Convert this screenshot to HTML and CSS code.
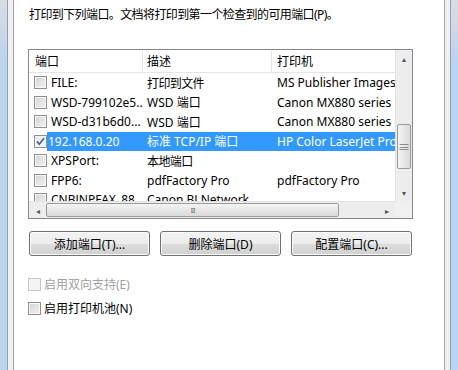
FILE: index.html
```html
<!DOCTYPE html>
<html lang="zh-CN">
<head>
    <meta charset="UTF-8">
    <title>端口</title>
    <link rel="stylesheet" href="styles.css">
</head>
<body>
    <div class="frame"></div>
    <div class="edge"></div>
    <div class="pad"></div>
    <div class="panel">
        <p class="intro">打印到下列端口。文档将打印到第一个检查到的可用端口(P)。</p>

        <div class="listbox">
            <div class="view">
                <div class="row header">
                    <div class="cell c1">端口</div>
                    <div class="cell c2">描述</div>
                    <div class="cell c3">打印机</div>
                </div>
                <div class="row">
                    <div class="cell c1"><span class="box"></span>FILE:</div>
                    <div class="cell c2 cjk">打印到文件</div>
                    <div class="cell c3">MS Publisher Imagesetter</div>
                </div>
                <div class="row">
                    <div class="cell c1"><span class="box"></span>WSD-799102e5...</div>
                    <div class="cell c2">WSD 端口</div>
                    <div class="cell c3">Canon MX880 series Printer</div>
                </div>
                <div class="row">
                    <div class="cell c1"><span class="box"></span>WSD-d31b6d0...</div>
                    <div class="cell c2">WSD 端口</div>
                    <div class="cell c3">Canon MX880 series Printer</div>
                </div>
                <div class="row selected">
                    <div class="cell c1"><span class="box checked">
                        <svg width="11" height="11" viewBox="0 0 11 11"><path d="M2 5.5 L4.3 8.2 L9 2.2" fill="none" stroke="#4a5f97" stroke-width="1.7"/></svg>
                    </span><span class="sel">192.168.0.20</span></div>
                    <div class="cell c2 sel">标准 TCP/IP 端口</div>
                    <div class="cell c3 sel">HP Color LaserJet Pro MFP</div>
                </div>
                <div class="row">
                    <div class="cell c1"><span class="box"></span>XPSPort:</div>
                    <div class="cell c2 cjk">本地端口</div>
                    <div class="cell c3"></div>
                </div>
                <div class="row">
                    <div class="cell c1"><span class="box"></span>FPP6:</div>
                    <div class="cell c2">pdfFactory Pro</div>
                    <div class="cell c3">pdfFactory Pro</div>
                </div>
                <div class="row">
                    <div class="cell c1"><span class="box"></span>CNBJNPFAX_88...</div>
                    <div class="cell c2">Canon BJ Network ...</div>
                    <div class="cell c3"></div>
                </div>
            </div>
            <div class="vscroll">
                <div class="arrow">&#9652;</div>
                <div class="track v-top"></div>
                <div class="thumb v"><span class="grip">&#8801;</span></div>
                <div class="track v-bottom"></div>
                <div class="arrow">&#9662;</div>
            </div>
            <div class="hscroll">
                <div class="arrow h">&#9666;</div>
                <div class="thumb h"><span class="grip">III</span></div>
                <div class="track h-rest"></div>
                <div class="arrow h">&#9656;</div>
            </div>
            <div class="corner"></div>
        </div>

        <div class="buttons">
            <button class="btn">添加端口(T)...</button>
            <button class="btn">删除端口(D)</button>
            <button class="btn">配置端口(C)...</button>
        </div>

        <label class="option disabled"><span class="box"></span>启用双向支持(E)</label>
        <label class="option"><span class="box"></span>启用打印机池(N)</label>
    </div>
    <div class="pad"></div>
    <div class="edge"></div>
    <div class="frame"></div>
</body>
</html>
```

FILE: styles.css
```css
body {
    margin: 0;
    height: 370px;
    display: flex;
    font-family: "Noto Sans", "Noto Sans CJK SC", sans-serif;
    font-size: 12px;
    color: #000;
    overflow: hidden;
}
.frame {
    width: 7px;
    background: linear-gradient(to bottom, #d9dde3 0px, #c9d6e6 40px, #bcd4f0 60px, #bcd4f0 100%);
}
.edge {
    width: 1px;
    background: #8ea0b8;
}
.pad {
    width: 5px;
    background: #f0f0f0;
}
.panel {
    flex: 1;
    background: #fff;
    border-left: 1px solid #a0a0a0;
    border-right: 1px solid #a0a0a0;
    padding: 0 0 0 14px;
}
.intro {
    margin: 8px 0 0 1px;
    line-height: 14px;
    letter-spacing: -0.6px;
}
.cjk {
    letter-spacing: -0.6px;
}

.listbox {
    margin-top: 27px;
    width: 383px;
    height: 168px;
    border: 1px solid #828790;
    display: grid;
    grid-template-columns: 366px 17px;
    grid-template-rows: 151px 17px;
}
.view {
    overflow: hidden;
}
.row {
    display: flex;
    height: 19.5px;
    align-items: center;
    white-space: nowrap;
}
.row.header {
    height: 22px;
    border-bottom: 1px solid #e5e5e5;
}
.cell {
    overflow: hidden;
    height: 100%;
    display: flex;
    align-items: center;
}
.c1 { width: 114px; padding-left: 5px; box-sizing: border-box; }
.c2 { width: 129px; padding-left: 4px; box-sizing: border-box; }
.c3 { width: 123px; padding-left: 5px; box-sizing: border-box; }
.header .cell {
    border-right: 1px solid #e3e4e6;
}
.header .c3 { border-right: none; }
.header .c1 { padding-left: 6px; }

.box {
    display: inline-flex;
    align-items: center;
    justify-content: center;
    width: 11px;
    height: 11px;
    border: 1px solid #8f8f8f;
    background: linear-gradient(135deg, #d2d2d2, #f4f4f4);
    box-shadow: inset 0 0 0 1px #f6f6f6;
    margin-right: 4px;
    flex: none;
}
.box.checked {
    background: linear-gradient(135deg, #e4e4e4, #fafafa);
}
.selected .sel {
    background: #3399ff;
    color: #fff;
}
.selected .c1 .sel {
    height: 100%;
    flex: 1;
    display: flex;
    align-items: center;
    padding-left: 1px;
}
.selected .c1 .box { margin-right: 0; }
.selected .c1 { padding-right: 0; }

.vscroll {
    display: flex;
    flex-direction: column;
    background: #ededed;
    border-left: 1px solid #e2e2e2;
}
.arrow {
    height: 17px;
    flex: none;
    display: flex;
    align-items: center;
    justify-content: center;
    font-size: 8px;
    color: #555;
}
.arrow.h {
    width: 17px;
    height: auto;
}
.track.v-top { height: 57px; }
.track.v-bottom { flex: 1; }
.thumb {
    background: linear-gradient(to right, #f4f4f4, #dadada);
    border: 1px solid #9a9a9a;
    border-radius: 2px;
    display: flex;
    align-items: center;
    justify-content: center;
    color: #777;
}
.thumb.v {
    height: 43px;
    margin: 0 1px;
    font-size: 12px;
}
.hscroll {
    display: flex;
    background: #ededed;
    border-top: 1px solid #e2e2e2;
}
.thumb.h {
    width: 291px;
    margin: 1px 0;
    background: linear-gradient(to bottom, #f4f4f4, #dadada);
    font-size: 7px;
    letter-spacing: -1px;
}
.track.h-rest { flex: 1; }
.corner {
    background: #f0f0f0;
}

.buttons {
    display: flex;
    gap: 10px;
    margin-top: 12px;
    margin-left: 1px;
}
.btn {
    width: 121px;
    height: 25px;
    font-family: inherit;
    font-size: 12px;
    color: #000;
    border: 1px solid #707070;
    border-radius: 3px;
    background: linear-gradient(to bottom, #f3f3f3 0%, #ececec 50%, #dddddd 51%, #d0d0d0 100%);
    box-shadow: inset 0 0 0 1px #fbfbfb;
    padding: 0;
}

.option {
    display: flex;
    align-items: center;
    height: 14px;
    margin-top: 21px;
}
.option + .option {
    margin-top: 10px;
}
.option .box { margin-right: 3px; }
.option.disabled {
    color: #a0a0a0;
}
.option.disabled .box {
    border-color: #c6c6c6;
    background: #f4f4f4;
}
```
